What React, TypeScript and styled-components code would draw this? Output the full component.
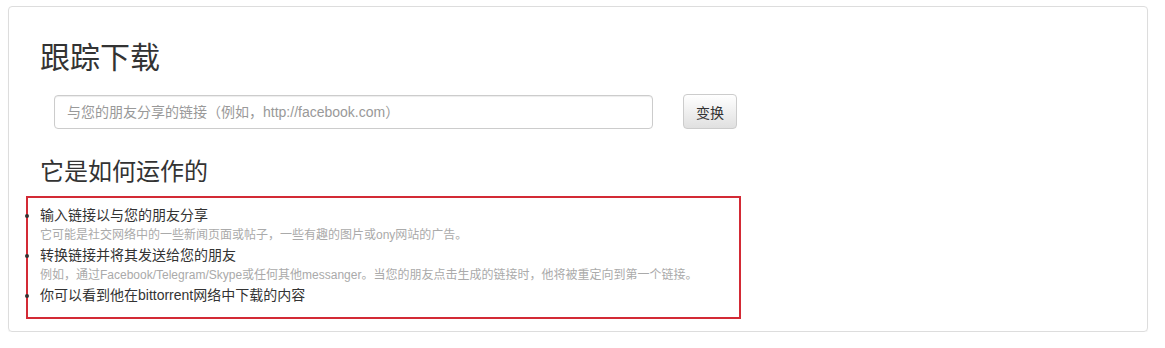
import styled, { createGlobalStyle } from "styled-components";

const Global = createGlobalStyle`
  body {
    margin: 0;
    background: #ffffff;
    font-family: "Liberation Sans", "Noto Sans CJK SC", sans-serif;
    color: #333333;
  }
`;

const Card = styled.div`
  margin: 6px 17px 0 8px;
  height: 326px;
  border: 1px solid #dddddd;
  border-radius: 4px;
  box-shadow: 0 1px 1px rgba(0, 0, 0, 0.05);
  padding: 0 0 0 16px;
  box-sizing: border-box;
`;

const Title = styled.h2`
  margin: 0;
  padding: 33px 0 0 15px;
  font-size: 30px;
  font-weight: 400;
  line-height: 36px;
  color: #333333;
`;

const FormRow = styled.form`
  display: flex;
  align-items: center;
  gap: 30px;
  margin: 18px 0 0 29px;
`;

const Input = styled.input`
  width: 599px;
  height: 34px;
  box-sizing: border-box;
  border: 1px solid #cccccc;
  border-radius: 4px;
  padding: 0 12px;
  font-family: inherit;
  font-size: 14px;
  color: #555555;
  box-shadow: inset 0 1px 1px rgba(0, 0, 0, 0.075);
  &::placeholder {
    color: #999999;
  }
`;

const Button = styled.button`
  width: 54px;
  height: 35px;
  border: 1px solid #cccccc;
  border-radius: 4px;
  background: linear-gradient(to bottom, #ffffff 0%, #e0e0e0 100%);
  font-family: inherit;
  font-size: 14px;
  color: #333333;
  padding: 0;
`;

const Subtitle = styled.h3`
  margin: 0;
  padding: 28px 0 0 15px;
  font-size: 24px;
  font-weight: 400;
  line-height: 30px;
  color: #333333;
`;

const Steps = styled.ul`
  margin: 9px 0 0 1px;
  width: 715px;
  height: 123px;
  box-sizing: border-box;
  border: 2px solid #d32a35;
  padding: 7px 0 0 12px;
  list-style: disc;
`;

const Step = styled.li`
  font-size: 14px;
  line-height: 20px;
  color: #333333;
`;

const Note = styled.div`
  font-size: 12px;
  line-height: 20px;
  color: #aaaaaa;
`;

export default function App() {
  return (
    <>
      <Global />
      <Card>
        <Title>跟踪下载</Title>
        <FormRow onSubmit={(e) => e.preventDefault()}>
          <Input placeholder="与您的朋友分享的链接（例如，http://facebook.com）" />
          <Button type="submit">变换</Button>
        </FormRow>
        <Subtitle>它是如何运作的</Subtitle>
        <Steps>
          <Step>
            输入链接以与您的朋友分享
            <Note>它可能是社交网络中的一些新闻页面或帖子，一些有趣的图片或ony网站的广告。</Note>
          </Step>
          <Step>
            转换链接并将其发送给您的朋友
            <Note>
              例如，通过Facebook/Telegram/Skype或任何其他messanger。当您的朋友点击生成的链接时，他将被重定向到第一个链接。
            </Note>
          </Step>
          <Step>你可以看到他在bittorrent网络中下载的内容</Step>
        </Steps>
      </Card>
    </>
  );
}
